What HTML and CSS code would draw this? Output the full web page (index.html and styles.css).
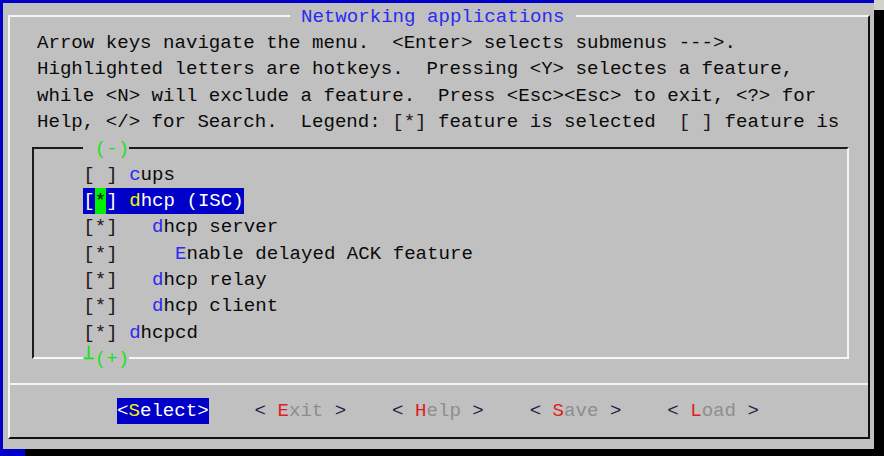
FILE: index.html
```html
<!DOCTYPE html>
<html>
<head>
<meta charset="utf-8">
<title>Networking applications</title>
<link rel="stylesheet" href="styles.css">
</head>
<body>
<div class="screen">
  <div class="dialog">
    <div class="frame">
      <div class="title"> Networking applications </div>
      <div class="help">
        <div class="line">Arrow keys navigate the menu.  &lt;Enter&gt; selects submenus ---&gt;.</div>
        <div class="line">Highlighted letters are hotkeys.  Pressing &lt;Y&gt; selectes a feature,</div>
        <div class="line">while &lt;N&gt; will exclude a feature.  Press &lt;Esc&gt;&lt;Esc&gt; to exit, &lt;?&gt; for</div>
        <div class="line">Help, &lt;/&gt; for Search.  Legend: <span class="br">[*]</span> feature is selected  <span class="br">[ ]</span> feature is</div>
      </div>
      <div class="menu">
        <div class="mark top"><span class="green">(-)</span></div>
        <div class="item"><span class="br">[ ]</span> <span class="hk">c</span>ups</div>
        <div class="item"><span class="sel">[<span class="star">*</span>] <span class="hk-sel">d</span>hcp (ISC)</span></div>
        <div class="item"><span class="br">[*]</span>   <span class="hk">d</span>hcp server</div>
        <div class="item"><span class="br">[*]</span>     <span class="hk">E</span>nable delayed ACK feature</div>
        <div class="item"><span class="br">[*]</span>   <span class="hk">d</span>hcp relay</div>
        <div class="item"><span class="br">[*]</span>   <span class="hk">d</span>hcp client</div>
        <div class="item"><span class="br">[*]</span> <span class="hk">d</span>hcpcd</div>
        <div class="mark bottom"><svg class="tee" width="11.46" height="26.3" viewBox="0 0 11.46 26.3"><path d="M0.5 13.15H11.46M5.7 0.5V13.15" stroke="#22e022" stroke-width="2" fill="none"/></svg><span class="green">(+)</span></div>
      </div>
      <div class="divider"></div>
      <div class="buttons"><span class="btn active">&lt;<span class="hk-sel">S</span>elect&gt;</span>    <span class="btn"><span class="ang">&lt;</span> <span class="hk-btn">E</span>xit <span class="ang">&gt;</span></span>    <span class="btn"><span class="ang">&lt;</span> <span class="hk-btn">H</span>elp <span class="ang">&gt;</span></span>    <span class="btn"><span class="ang">&lt;</span> <span class="hk-btn">S</span>ave <span class="ang">&gt;</span></span>    <span class="btn"><span class="ang">&lt;</span> <span class="hk-btn">L</span>oad <span class="ang">&gt;</span></span></div>
    </div>
  </div>
</div>
</body>
</html>
```
FILE: styles.css
```css
html, body {
  margin: 0;
  padding: 0;
  background: #0000c8;
}

.screen {
  width: 884px;
  height: 456px;
  position: relative;
  overflow: hidden;
  padding: 3px 0 0 3px;
  box-sizing: border-box;
}

.screen::after {
  content: "";
  position: absolute;
  right: 0;
  top: 0;
  width: 10px;
  height: 10px;
  background: #d2d2cc;
}

.dialog {
  width: 871px;
  height: 446px;
  background: #c0c0c0;
  box-shadow: 22px 7px 0 #000;
  padding: 12px 4px 10px 5px;
  box-sizing: border-box;
  font-family: "Liberation Mono", "DejaVu Sans Mono", monospace;
  font-size: 19.1px;
  line-height: 26.3px;
  color: #0a0a0a;
}

.frame {
  position: relative;
  height: 100%;
  box-sizing: border-box;
  border-style: solid;
  border-width: 2px;
  border-color: #f6f6f6 #111 #111 #f6f6f6;
}

.title {
  position: absolute;
  left: 279.5px;
  top: -13.5px;
  white-space: pre;
  background: #c0c0c0;
  color: #2a2af2;
}

.help {
  margin: 13px 0 0 27px;
}

.line,
.item,
.mark,
.buttons {
  white-space: pre;
}

.br {
  color: #24141c;
}

.menu {
  position: relative;
  margin: 11.8px 19px 0 22px;
  height: 212px;
  box-sizing: border-box;
  border-style: solid;
  border-width: 2px;
  border-color: #1c1c1c #f6f6f6 #f6f6f6 #1c1c1c;
  padding: 12.85px 0 0 49.3px;
}

.mark {
  position: absolute;
  left: 49.3px;
}

.mark.top {
  top: -11px;
  line-height: 22px;
  padding-left: 11.46px;
  background: #c0c0c0;
}

.mark.bottom {
  bottom: -14.15px;
  display: flex;
}

.mark.bottom .green {
  background: #c0c0c0;
  align-self: center;
  line-height: 22px;
  margin-top: 2px;
}

.tee {
  display: block;
}

.green {
  color: #22e022;
}

.hk {
  color: #2a2af2;
}

.sel {
  display: inline-block;
  background: #0000c8;
  color: #fff;
}

.star {
  display: inline-block;
  background: #00f000;
  color: #000;
}

.hk-sel {
  color: #f4f400;
}

.divider {
  height: 2px;
  background: #f4f4f4;
  margin-top: 24px;
}

.buttons {
  margin: 13px 0 0 107px;
}

.btn {
  color: #8e8e8e;
}

.btn.active {
  display: inline-block;
  background: #0000c8;
  color: #fff;
}

.ang {
  color: #1c2244;
}

.hk-btn {
  color: #e01c1c;
}
```
